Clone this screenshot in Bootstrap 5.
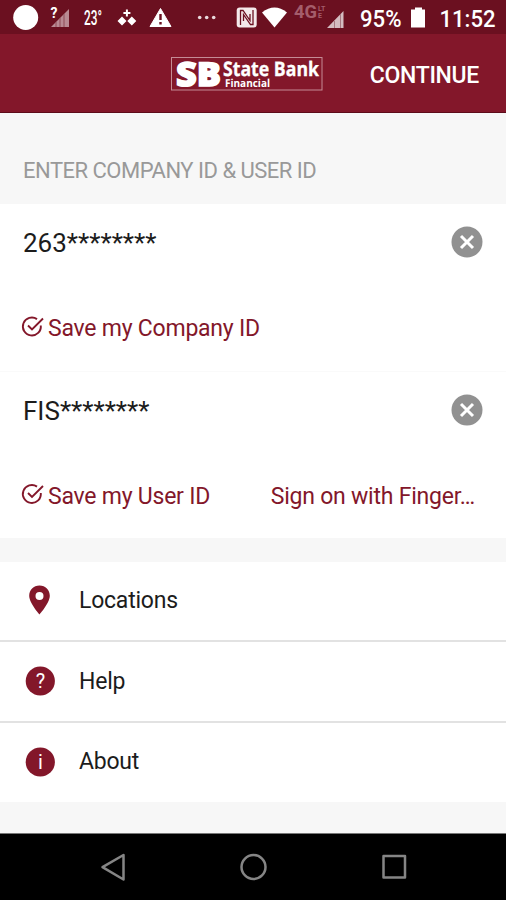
<!DOCTYPE html>
<html lang="en">
<head>
<meta charset="utf-8">
<meta name="viewport" content="width=device-width, initial-scale=1">
<title>State Bank Financial</title>
<link href="https://cdn.jsdelivr.net/npm/bootstrap@5.3.0/dist/css/bootstrap.min.css" rel="stylesheet">
<style>
:root { --brand: #83172a; --brand-dark: #6b1020; }
body { font-family: Roboto, sans-serif; background: #f7f7f7; color: #1c1c1c; height: 900px; overflow: hidden; }
svg { display: block; flex: none; overflow: visible; }
.status-bar { height: 34px; background: var(--brand-dark); }
.status-bar svg { height: 34px; }
.status-bar text, .logo text { fill: #fff; }
.logo text { text-rendering: geometricPrecision; }
.top-bar { height: 79px; background: var(--brand); border-bottom: 1px solid #5d0c1b; padding: 1px 27px 0 171px; }
.btn-continue { padding: 4px 0 0; font-size: 23px; font-weight: 500; line-height: 30px; color: #fff; letter-spacing: -.32px; }
.section-title { height: 91px; padding: 25px 23px 0; font-size: 22px; line-height: 66px; color: #999; letter-spacing: -.5px; }
.id-row { height: 80px; padding: 0 23px 4px 23px; font-size: 26px; }
.id-row span { padding-top: 3px; }
.save-row { height: 87px; padding: 0 31px 0 22px; font-size: 23px; letter-spacing: -.23px; color: var(--brand); }
.save-row span { padding-top: 4px; }
.save-row:last-child span { padding-top: 5px; }
.save-row + .id-row { border-top: 1px solid #fafafa; }
.menu .list-group-item { height: 80px; padding: 0 0 0 24px; font-size: 23px; letter-spacing: -.23px; color: #1c1c1c; border-color: #e2e2e2; border-width: 0 0 2px; }
.menu .list-group-item:nth-child(2) { height: 81px; }
.menu .list-group-item:last-child { border: 0; height: 79px; }
.menu svg { margin: 0 23px 2px 0; }
.menu span { padding-top: 1px; }
.menu .list-group-item:last-child span { padding-top: 0; }
.nav-keys { height: 67px; background: #000; border-top: 1px solid #777; }
</style>
</head>
<body class="d-flex flex-column">
<div class="status-bar d-flex">
  <svg width="506" viewBox="0 0 506 34" role="img" aria-label="Status icons">
    <circle cx="25.700" cy="17.500" r="12.500" fill="#fff"/>
    <path d="M69 9v18H51z" fill="#b98a93"/>
    <path d="M56 22v5M60 18v9M64 14v13" stroke="#8e4a57" stroke-width="1"/>
    <text x="50.500" y="18" font-size="14" font-weight="700">?</text>
    <text x="84" y="25" font-size="20" font-weight="500" textLength="18" lengthAdjust="spacingAndGlyphs">23°</text>
    <g fill="#fff"><path d="M125.900 9.500h2v2.500h2.500v2h-2.500v2.500h-2V14h-2.500v-2h2.500zM122 16.500l4.500 4.500-4.500 4.500-4.500-4.500zM131.800 16.500l4.500 4.500-4.500 4.500-4.500-4.500z"/></g>
    <path d="M160.500 8.500l10.500 18h-21z" fill="#fff" stroke="#fff" stroke-linejoin="round"/>
    <path d="M160.500 14v6M160.500 22v2.500" stroke="#6b1020" stroke-width="2.400"/>
    <g fill="#e9d9dc"><circle cx="199.700" cy="17.500" r="1.800"/><circle cx="206.700" cy="17.500" r="1.800"/><circle cx="213.700" cy="17.500" r="1.800"/></g>
    <rect x="236.700" y="7.500" width="20" height="20" rx="3" fill="#f4e9ea"/>
    <path d="M240.500 25V10.500h2.500l7 10V14M253 10v14.500h-2.500l-7-10V21" fill="none" stroke="#6b1020" stroke-width="1.300"/>
    <path d="M262 12.500q12.500-10 25 0L274.500 27.500z" fill="#fff"/>
    <text x="294" y="18" font-size="18" font-weight="700" style="fill:#a45d6b" textLength="23" lengthAdjust="spacingAndGlyphs">4G</text>
    <text x="318" y="11" font-size="7" font-weight="700" style="fill:#a45d6b">LT</text>
    <text x="318" y="18" font-size="7" font-weight="700" style="fill:#a45d6b">E</text>
    <path d="M343.500 11v17H327z" fill="#d4bcc0"/>
    <path d="M334.500 21v7M340.500 14v14" stroke="#a57780" stroke-width="1"/>
    <text x="360" y="26.500" font-size="23" font-weight="500" textLength="41.500" lengthAdjust="spacingAndGlyphs">95%</text>
    <path d="M415 7.500h7v2h3v18h-14v-18h4z" fill="#fff"/>
    <text x="439.500" y="26.500" font-size="23" font-weight="500" textLength="56" lengthAdjust="spacingAndGlyphs">11:52</text>
  </svg>
</div>
<header class="top-bar d-flex align-items-center justify-content-between">
  <svg class="logo" width="152" height="34" viewBox="0 0 152 34" role="img" aria-label="SB State Bank Financial">
    <rect x=".500" y=".500" width="150.500" height="32.500" fill="none" stroke="#c58b95"/>
    <g font-family="'Open Sans', sans-serif">
      <text x="5" y="28.500" font-size="33" font-weight="800" stroke="#fff" stroke-width="1.500" textLength="45" lengthAdjust="spacingAndGlyphs">SB</text>
      <text x="52" y="18.500" font-size="20" font-weight="700" stroke="#fff" stroke-width=".300" textLength="96" lengthAdjust="spacingAndGlyphs">State Bank</text>
      <text x="54" y="30" font-size="11" font-weight="700" textLength="45" lengthAdjust="spacingAndGlyphs">Financial</text>
    </g>
  </svg>
  <button class="btn btn-continue border-0">CONTINUE</button>
</header>
<main>
  <div class="section-title text-uppercase">Enter Company ID &amp; User ID</div>
  <section class="bg-white">
    <div class="id-row d-flex align-items-center justify-content-between">
      <span>263********</span>
      <svg width="32" height="32" viewBox="0 0 32 32"><circle cx="16" cy="16" r="15.500" fill="#919191"/><path d="M10 10l12 12M22 10L10 22" stroke="#fff" stroke-width="3"/></svg>
    </div>
    <div class="save-row d-flex align-items-center">
      <svg width="22" height="22" viewBox="0 0 22 22" fill="none" stroke="#83172a" stroke-width="1.900"><path d="M15 2.100A9 9 0 1 0 18.800 8.500M6 8.500l4 4L21 1.500"/></svg>
      <span class="ms-1">Save my Company ID</span>
    </div>
    <div class="id-row d-flex align-items-center justify-content-between">
      <span>FIS********</span>
      <svg width="32" height="32" viewBox="0 0 32 32"><circle cx="16" cy="16" r="15.500" fill="#919191"/><path d="M10 10l12 12M22 10L10 22" stroke="#fff" stroke-width="3"/></svg>
    </div>
    <div class="save-row d-flex align-items-center">
      <svg width="22" height="22" viewBox="0 0 22 22" fill="none" stroke="#83172a" stroke-width="1.900"><path d="M15 2.600A9 9 0 1 0 18.800 9M6 9l4 4L21 2"/></svg>
      <span class="ms-1">Save my User ID</span>
      <span class="ms-auto">Sign on with Finger…</span>
    </div>
  </section>
  <div class="menu list-group list-group-flush mt-4">
    <a class="list-group-item d-flex align-items-center">
      <svg width="32" height="30" viewBox="0 0 32 30"><path d="M15.500 .500C9.500 .500 5.200 5 5.200 10.800 5.200 18 15.500 29.500 15.500 29.500S25.800 18 25.800 10.800C25.800 5 21.500 .500 15.500 .500zm0 6.500a4 4 0 1 1 0 8 4 4 0 0 1 0-8z" fill="#83172a"/></svg><span>Locations</span></a>
    <a class="list-group-item d-flex align-items-center">
      <svg width="32" height="30" viewBox="0 0 32 30"><circle cx="16.300" cy="15" r="14.600" fill="#83172a"/><text x="16.300" y="22" font-size="20" text-anchor="middle" fill="#fff">?</text></svg><span>Help</span></a>
    <a class="list-group-item d-flex align-items-center">
      <svg width="32" height="30" viewBox="0 0 32 30"><circle cx="16.300" cy="15" r="14.600" fill="#83172a"/><text x="16.300" y="22" font-size="20" text-anchor="middle" fill="#fff">i</text></svg><span>About</span></a>
  </div>
</main>
<footer class="nav-keys mt-auto">
  <svg width="506" height="66" viewBox="0 0 506 66" fill="none" stroke="#858585" stroke-width="2.500" stroke-linejoin="round"><path d="M123.500 21v24.500L102.500 33.200z"/><circle cx="253.500" cy="33" r="12"/><rect x="383.500" y="22" width="21.500" height="21.500"/></svg>
</footer>
<script src="https://cdn.jsdelivr.net/npm/bootstrap@5.3.0/dist/js/bootstrap.bundle.min.js"></script>
</body>
</html>
